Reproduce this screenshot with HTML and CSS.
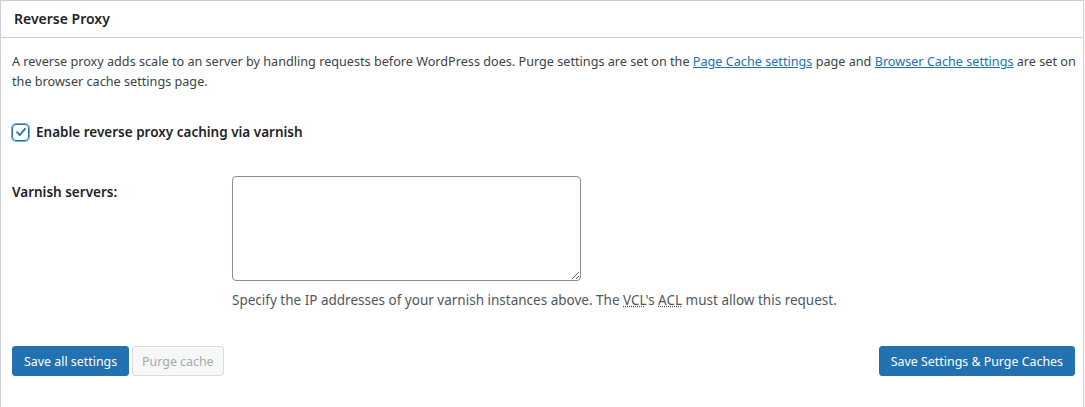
FILE: index.html
```html
<!DOCTYPE html>
<html lang="en">
<head>
    <meta charset="UTF-8">
    <title>Reverse Proxy</title>
    <link rel="stylesheet" href="styles.css">
</head>
<body>
    <div class="postbox">
        <h3 class="hndle">Reverse Proxy</h3>
        <div class="inside">
            <p class="intro">A reverse proxy adds scale to an server by handling requests before WordPress does. Purge settings are set on the <a href="#">Page Cache settings</a> page and <a href="#">Browser Cache settings</a> are set on the browser cache settings page.</p>

            <label class="check-row">
                <span class="checkbox">
                    <svg width="14" height="14" viewBox="0 0 14 14"><path d="M3 7.2 L5.8 10 L11 3.8" fill="none" stroke="#2271b1" stroke-width="1.8" stroke-linecap="round" stroke-linejoin="round"/></svg>
                </span>
                Enable reverse proxy caching via varnish
            </label>

            <div class="form-row">
                <div class="form-label">Varnish servers:</div>
                <div class="form-field">
                    <textarea class="servers" rows="5"></textarea>
                    <p class="description">Specify the IP addresses of your varnish instances above. The <abbr>VCL</abbr>'s <abbr>ACL</abbr> must allow this request.</p>
                </div>
            </div>

            <div class="actions">
                <div class="actions-left">
                    <button class="button primary">Save all settings</button>
                    <button class="button disabled">Purge cache</button>
                </div>
                <button class="button primary">Save Settings &amp; Purge Caches</button>
            </div>
        </div>
    </div>
</body>
</html>
```

FILE: styles.css
```css
* {
    margin: 0;
    padding: 0;
    box-sizing: border-box;
}

body {
    font-family: "Noto Sans", "Open Sans", sans-serif;
    font-size: 13px;
    color: #1d2327;
    background: #fff;
}

.postbox {
    width: 1084px;
    min-height: 407px;
    border: 1px solid #ccd0d4;
    border-bottom: none;
}

.hndle {
    height: 37px;
    line-height: 35px;
    padding: 0 13px;
    font-size: 14px;
    font-weight: 600;
    border-bottom: 1px solid #ccd0d4;
}

.inside {
    padding: 13px 8px 0 11px;
}

.intro {
    margin-right: -6px;
    line-height: 20px;
    font-size: 12.65px;
    color: #3c434a;
}

.intro a {
    color: #2271b1;
}

.check-row {
    display: flex;
    align-items: center;
    gap: 7px;
    margin-top: 32px;
    font-size: 13.5px;
    font-weight: 600;
    color: #1d2327;
}

.checkbox {
    width: 17px;
    height: 17px;
    border: 1.5px solid #2271b1;
    border-radius: 4px;
    display: flex;
    align-items: center;
    justify-content: center;
    box-shadow: 0 0 0 1px #72aee6;
}

.form-row {
    display: flex;
    margin-top: 35px;
}

.form-label {
    width: 220px;
    flex-shrink: 0;
    padding-top: 7px;
    font-size: 13.5px;
    font-weight: 600;
}

.servers {
    display: block;
    width: 349px;
    height: 105px;
    border: 1px solid #8c8f94;
    border-radius: 4px;
    resize: both;
    font-family: inherit;
}

.description {
    margin-top: 9px;
    font-size: 13.5px;
    line-height: 20px;
    color: #50575e;
}

abbr {
    text-decoration: underline dotted;
}

.actions {
    display: flex;
    justify-content: space-between;
    align-items: center;
    margin-top: 36px;
}

.actions-left {
    display: flex;
    gap: 3px;
}

.button {
    height: 30px;
    padding: 0 11px;
    border-radius: 3px;
    font-family: inherit;
    font-size: 12.4px;
    border: 1px solid #2271b1;
    cursor: pointer;
}

.button.primary {
    background: #2271b1;
    color: #fff;
}

.button.disabled {
    padding: 0 9px;
    background: #f6f7f7;
    border-color: #dcdcde;
    color: #a7aaad;
}
```
